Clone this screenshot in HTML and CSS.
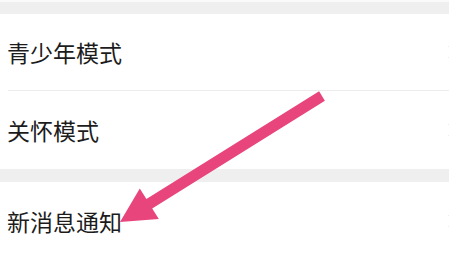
FILE: index.html
```html
<!DOCTYPE html>
<html lang="zh">
<head>
<meta charset="utf-8">
<link rel="stylesheet" href="styles.css">
</head>
<body>
<div class="page">
  <div class="top"></div>
  <div class="gap gap-top"></div>
  <div class="group">
    <div class="row row-a"><span class="label">青少年模式</span><span class="chev"><svg width="10" height="16" viewBox="0 0 10 16"><path d="M2 2 L8 8 L2 14" fill="none" stroke="#c8c8c8" stroke-width="1.6"/></svg></span></div>
    <div class="divider"></div>
    <div class="row row-b"><span class="label">关怀模式</span><span class="chev"><svg width="10" height="16" viewBox="0 0 10 16"><path d="M2 2 L8 8 L2 14" fill="none" stroke="#c8c8c8" stroke-width="1.6"/></svg></span></div>
  </div>
  <div class="gap gap-mid"></div>
  <div class="group">
    <div class="row row-c"><span class="label">新消息通知</span><span class="chev"><svg width="10" height="16" viewBox="0 0 10 16"><path d="M2 2 L8 8 L2 14" fill="none" stroke="#c8c8c8" stroke-width="1.6"/></svg></span></div>
  </div>
  <svg class="arrow" width="449" height="257" viewBox="0 0 449 257">
    <polygon points="120,222 158.8,219 152.2,208.4 324.9,100.7 319.1,91.3 146.4,199 139.8,188.4" fill="#e9457d"/>
  </svg>
</div>
</body>
</html>
```
FILE: styles.css
```css
html, body {
  margin: 0;
  padding: 0;
  background: #ffffff;
}
.page {
  position: relative;
  width: 449px;
  height: 257px;
  overflow: hidden;
  font-family: "Noto Sans CJK SC", "Noto Sans", sans-serif;
  color: #1c1c1c;
}
.top {
  height: 2px;
  background: #fafafa;
}
.gap {
  background: #efefef;
}
.gap-top {
  height: 12px;
}
.gap-mid {
  height: 13px;
}
.group {
  background: #ffffff;
}
.row {
  display: flex;
  align-items: center;
  justify-content: space-between;
  padding-left: 7px;
  font-size: 23px;
  line-height: 1;
}
.row-a {
  height: 76px;
}
.row-b {
  height: 78px;
}
.row-c {
  height: 78px;
}
.label {
  letter-spacing: 0;
}
.chev {
  display: flex;
  margin-right: -8px;
}
.divider {
  height: 1px;
  margin-left: 8px;
  background: #ececec;
}
.arrow {
  position: absolute;
  left: 0;
  top: 0;
}
```
